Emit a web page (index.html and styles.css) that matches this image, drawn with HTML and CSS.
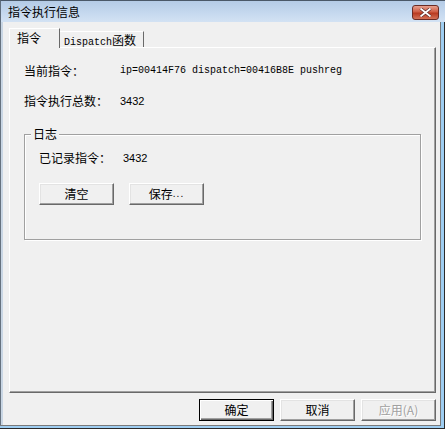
FILE: index.html
```html
<!DOCTYPE html>
<html>
<head>
<meta charset="utf-8">
<link rel="stylesheet" href="styles.css">
</head>
<body>
<div class="window">
  <div class="titlebar">
    <span class="title">指令执行信息</span>
    <div class="close">
      <svg width="13" height="9" viewBox="0 0 13 9">
        <path d="M1.5 0.5 L11.5 8.5 M11.5 0.5 L1.5 8.5" stroke="#5a2a2a" stroke-width="3.2" fill="none"/>
        <path d="M1.5 0.5 L11.5 8.5 M11.5 0.5 L1.5 8.5" stroke="#ffffff" stroke-width="1.8" fill="none"/>
      </svg>
    </div>
  </div>
  <div class="content">
    <div class="tabs">
      <div class="tab active">指令</div>
      <div class="tab"><span class="mono">Dispatch</span>函数</div>
    </div>
    <div class="panel">
      <div class="row">
        <span class="label">当前指令：</span>
        <span class="mono">ip=00414F76 dispatch=00416B8E pushreg</span>
      </div>
      <div class="row row2">
        <span class="label">指令执行总数：</span>
        <span class="num">3432</span>
      </div>
      <div class="group">
        <span class="legend">日志</span>
        <div class="row">
          <span class="label short">已记录指令：</span>
          <span class="num">3432</span>
        </div>
        <div class="group-buttons">
          <div class="btn">清空</div>
          <div class="btn">保存<span class="dots">...</span></div>
        </div>
      </div>
    </div>
    <div class="footer">
      <div class="btn default">确定</div>
      <div class="btn">取消</div>
      <div class="btn disabled">应用(<u>A</u>)</div>
    </div>
  </div>
</div>
</body>
</html>
```
FILE: styles.css
```css
html, body {
  margin: 0;
  padding: 0;
  background: #f0f0f0;
}
body {
  font-family: "Noto Sans CJK SC", "Liberation Sans", sans-serif;
  font-size: 12px;
  color: #000;
}
.window {
  width: 445px;
  height: 429px;
  box-sizing: border-box;
  background: #f0f0f0;
  box-shadow:
    inset -1px -1px 0 #2a2a2a,
    inset -4px -3px 0 #9ecdf1,
    inset -5px -4px 0 #7a7a7a,
    inset 1px 0 0 #66727f,
    inset 3px 0 0 #c9d6e4;
  overflow: hidden;
}
.titlebar {
  height: 22px;
  display: flex;
  justify-content: space-between;
  align-items: flex-start;
  padding: 0 6px 0 7px;
  background: linear-gradient(#b4cbe6, #c6d9ef 60%, #d3e2f3);
  border-top: 1px solid #4a5868;
  box-sizing: border-box;
  border-left: 1px solid #5f6d7c;
}
.title {
  line-height: 20px;
  padding-top: 1px;
}
.close {
  margin-top: 4px;
  width: 27px;
  height: 15px;
  box-sizing: border-box;
  border: 1px solid #6a2b24;
  border-radius: 3px;
  background: linear-gradient(#e7a08f, #cf5d44 45%, #b8391f 55%, #d47258);
  display: flex;
  align-items: center;
  justify-content: center;
}
.close svg { display: block; }
.content {
  padding: 6px 9px 0 9px;
}
.tabs {
  display: flex;
  align-items: flex-end;
  height: 20px;
  margin-bottom: -1px;
  position: relative;
  z-index: 1;
}
.tab {
  box-sizing: border-box;
  height: 16px;
  line-height: 15px;
  padding: 0 0 0 4px;
  width: 84px;
  border-top: 1px solid #fff;
  border-right: 1px solid #696969;
  background: #f0f0f0;
  margin-bottom: 1px;
}
.tab.active {
  height: 20px;
  width: 51px;
  line-height: 16px;
  padding: 1px 0 0 7px;
  border-left: 1px solid #fff;
  margin-bottom: 0;
}
.mono {
  font-family: "Liberation Mono", "DejaVu Sans Mono", monospace;
  font-size: 10px;
}
.panel {
  height: 346px;
  box-sizing: border-box;
  border: 1px solid;
  border-color: #fff #696969 #696969 #fff;
  box-shadow: inset -1px -1px 0 #a0a0a0;
  padding: 15px 0 0 14px;
}
.row {
  display: flex;
  align-items: center;
  height: 16px;
  line-height: 16px;
}
.row2 { margin-top: 14px; }
.label { width: 96px; flex: none; }
.label.short { width: 84px; }
.num {
  font-family: "Liberation Sans", sans-serif;
  font-size: 11px;
}
.group {
  position: relative;
  margin-top: 25px;
  width: 397px;
  height: 106px;
  box-sizing: border-box;
  border: 1px solid #a0a0a0;
  box-shadow: inset 1px 1px 0 #fff, 1px 1px 0 #fff;
  padding: 15px 0 0 14px;
}
.legend {
  position: absolute;
  left: 6px;
  top: -9px;
  padding: 0 2px;
  background: #f0f0f0;
  line-height: 16px;
}
.group-buttons {
  display: flex;
  gap: 15px;
  margin-top: 17px;
}
.btn {
  width: 75px;
  height: 22px;
  box-sizing: border-box;
  border: 1px solid;
  border-color: #fff #696969 #696969 #fff;
  box-shadow: inset -1px -1px 0 #a0a0a0, inset 1px 1px 0 #e3e3e3;
  background: #f0f0f0;
  display: flex;
  align-items: center;
  justify-content: center;
  line-height: 16px;
}
.btn .dots {
  font-family: "Liberation Sans", sans-serif;
  font-size: 10px;
  letter-spacing: 1px;
}
.btn.default {
  border: 1px solid #000;
  box-shadow: inset 1px 1px 0 #fff, inset -1px -1px 0 #696969, inset -2px -2px 0 #a0a0a0;
}
.btn.disabled {
  color: #a0a0a0;
  text-shadow: 1px 1px 0 #fff;
}
.btn.disabled u { text-decoration: none; }
.footer {
  display: flex;
  justify-content: flex-end;
  gap: 6px;
  margin-top: 6px;
}
```
